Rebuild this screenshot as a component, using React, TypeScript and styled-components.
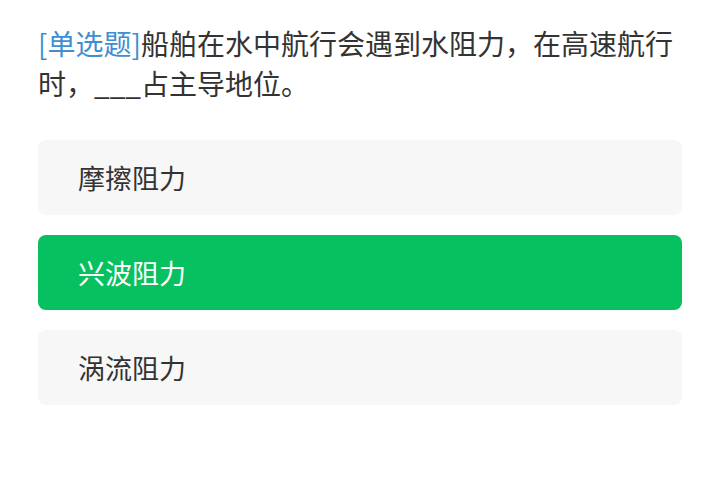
import React from "react";
import styled, { createGlobalStyle } from "styled-components";

const Global = createGlobalStyle`
  html, body { margin: 0; padding: 0; background: #ffffff; }
  body { font-family: "Noto Sans CJK SC", "Noto Sans", sans-serif; }
`;

const Page = styled.div`
  width: 720px;
  box-sizing: border-box;
  padding: 23px 38px 0 38px;
  display: flex;
  flex-direction: column;
`;

const Question = styled.div`
  font-size: 28px;
  line-height: 40px;
  color: #333333;
  margin-bottom: 37px;
`;

const Tag = styled.span`
  color: #3f8fd0;
`;

const Options = styled.div`
  display: flex;
  flex-direction: column;
  gap: 20px;
`;

const Option = styled.div<{ $selected?: boolean }>`
  height: 75px;
  box-sizing: border-box;
  padding: 0 40px;
  display: flex;
  align-items: center;
  border-radius: 8px;
  font-size: 27px;
  background: ${(p) => (p.$selected ? "#07c160" : "#f7f7f7")};
  color: ${(p) => (p.$selected ? "#ffffff" : "#333333")};
`;

const options = [
  { text: "摩擦阻力", selected: false },
  { text: "兴波阻力", selected: true },
  { text: "涡流阻力", selected: false },
];

export default function App() {
  return (
    <>
      <Global />
      <Page>
        <Question>
          <Tag>[单选题]</Tag>船舶在水中航行会遇到水阻力，在高速航行时，___占主导地位。
        </Question>
        <Options>
          {options.map((o) => (
            <Option key={o.text} $selected={o.selected}>
              {o.text}
            </Option>
          ))}
        </Options>
      </Page>
    </>
  );
}
